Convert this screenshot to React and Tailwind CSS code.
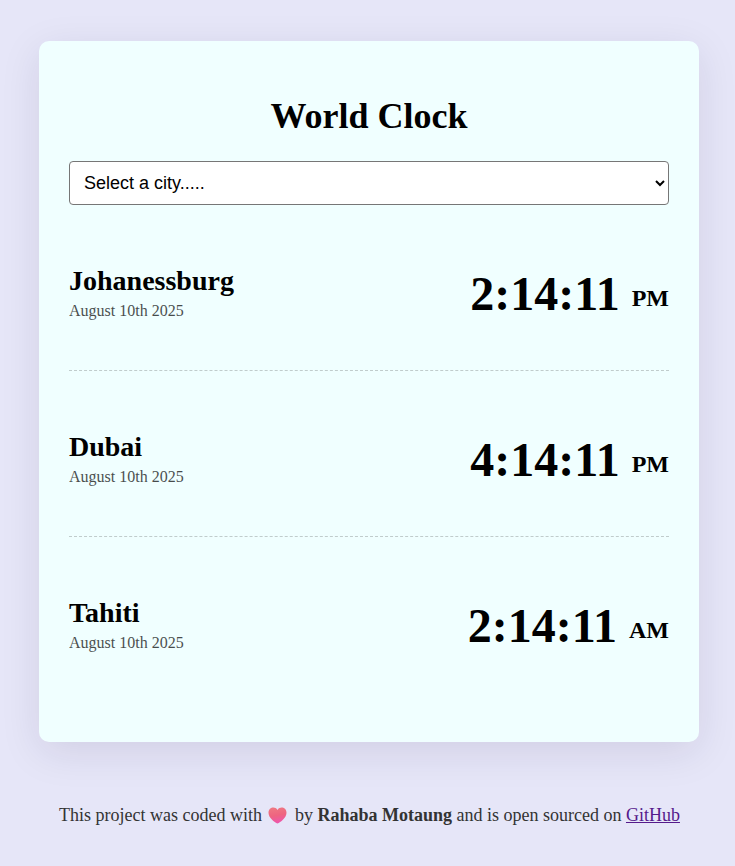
const clocks = [
  { city: "Johanessburg", time: "2:14:11", period: "PM" },
  { city: "Dubai", time: "4:14:11", period: "PM" },
  { city: "Tahiti", time: "2:14:11", period: "AM" },
];

function Heart() {
  return (
    <svg viewBox="0 0 19 17" className="mr-[3px] ml-0.5 inline-block h-[17px] w-[19px] align-[-3px]">
      <defs>
        <linearGradient id="heart" x1="0.3" y1="0" x2="0.5" y2="1">
          <stop offset="0" stopColor="#ef7883" />
          <stop offset="0.5" stopColor="#ee6480" />
          <stop offset="1" stopColor="#ee55b0" />
        </linearGradient>
      </defs>
      <path
        d="M9.5 16.5C6.5 15.5.5 10.8.5 5.8.5.3 7-1.2 9.5 3 12-1.2 18.5.3 18.5 5.8c0 5-6 9.7-9 10.7Z"
        fill="url(#heart)"
      />
    </svg>
  );
}

function Clock({ city, time, period, last }) {
  return (
    <div
      className={
        "flex h-[166px] items-center justify-between " +
        (last ? "" : "border-b border-dashed border-[#c0cccc]")
      }
    >
      <div className="pt-[9px]">
        <h2 className="text-[28px] leading-8 font-bold">{city}</h2>
        <div className="mt-[5px] text-base leading-[18px] opacity-70">August 10th 2025</div>
      </div>
      <div className="flex gap-3 font-bold">
        <span className="pt-[11px] text-[48px] leading-[55px]">{time}</span>
        <small className="block pt-[29px] text-[24px] leading-[28px]">{period}</small>
      </div>
    </div>
  );
}

export default function App() {
  return (
    <div className="min-h-[866px] bg-[#e6e6f8] pt-[41px] pl-[3px] font-['Liberation_Serif',serif] text-black">
      <main className="mx-auto h-[701px] w-[660px] rounded-[10px] bg-[#f0ffff] px-[30px] pt-[55px] shadow-[0_10px_40px_rgba(31,11,61,0.1)]">
        <h1 className="text-center text-[36px] leading-[41px] font-bold">World Clock</h1>
        <select className="mt-6 block h-11 w-full rounded-[4px] border border-[#767676] bg-white px-[10px] font-['Liberation_Sans',sans-serif] text-[18px]">
          <option>Select a city.....</option>
        </select>
        {clocks.map((clock, i) => (
          <Clock key={clock.city} {...clock} last={i === clocks.length - 1} />
        ))}
      </main>
      <footer className="mt-[63px] pl-px text-center text-[18px] leading-[21px] text-[#333]">
        This project was coded with <Heart /> by <strong>Rahaba Motaung</strong> and is open sourced on{" "}
        <a href="#" className="text-[#551a8b] underline">GitHub</a>
      </footer>
    </div>
  );
}
